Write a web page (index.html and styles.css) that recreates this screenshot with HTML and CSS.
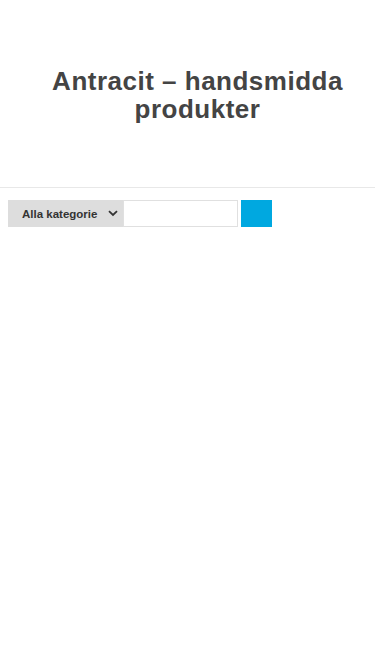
FILE: index.html
```html
<!DOCTYPE html>
<html lang="sv">
<head>
    <meta charset="UTF-8">
    <meta name="viewport" content="width=device-width, initial-scale=1.0">
    <title>Antracit – handsmidda produkter</title>
    <link rel="stylesheet" href="styles.css">
</head>
<body>
    <header class="site-header">
        <h1 class="site-title">Antracit – handsmidda produkter</h1>
    </header>

    <div class="search-bar">
        <form class="search-form">
            <div class="category-select">
                <span>Alla kategorie</span>
                <svg width="10" height="7" viewBox="0 0 10 7">
                    <path d="M1 1.2 L5 5 L9 1.2" fill="none" stroke="#333" stroke-width="1.8"/>
                </svg>
            </div>
            <input type="text" class="search-input">
            <button type="button" class="search-btn"></button>
        </form>
    </div>
</body>
</html>
```

FILE: styles.css
```css
body {
    font-family: "Liberation Sans", Arial, sans-serif;
    margin: 0;
    padding: 0;
    background-color: #ffffff;
    color: #444;
}

.site-header {
    height: 188px;
    box-sizing: border-box;
    padding: 67px 20px 0 40px;
    border-bottom: 1px solid #e8e8e8;
}

.site-title {
    margin: 0;
    text-align: center;
    font-size: 26px;
    line-height: 28px;
    letter-spacing: 0.5px;
    font-weight: bold;
    color: #444;
}

.search-bar {
    padding: 12px 8px;
}

.search-form {
    display: flex;
    align-items: stretch;
    height: 27px;
}

.category-select {
    width: 115px;
    box-sizing: border-box;
    background-color: #dddddd;
    display: flex;
    align-items: center;
    justify-content: space-between;
    padding: 0 5px 0 14px;
    font-size: 11.5px;
    font-weight: bold;
    color: #333;
}

.search-input {
    width: 115px;
    box-sizing: border-box;
    margin: 0;
    border: 1px solid #e0e0e0;
    padding: 0 6px;
    outline: none;
}

.search-btn {
    width: 31px;
    margin: 0 0 0 3px;
    padding: 0;
    border: none;
    background-color: #00a8e0;
}
```
